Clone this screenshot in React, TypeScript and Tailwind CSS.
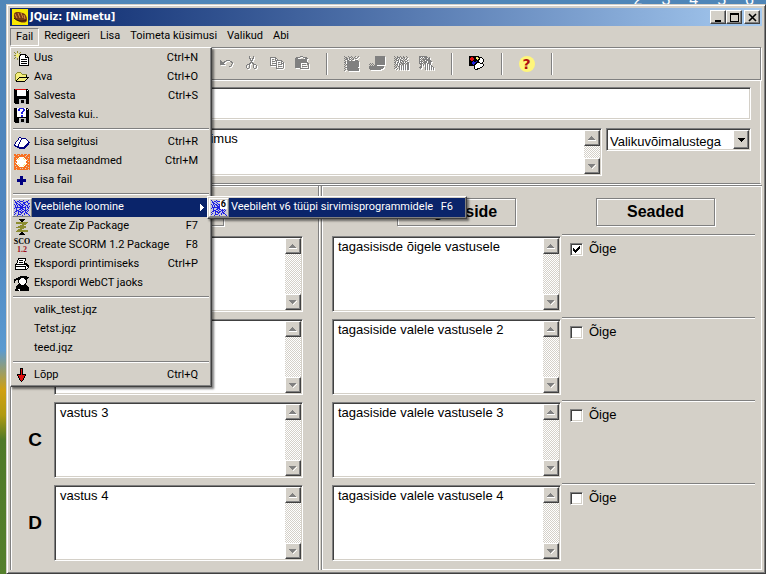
import React from "react";

type Palette = Record<string, string>;

const palette: Palette = {
  k: "#000000",
  w: "#ffffff",
  y: "#f4ee7c",
  g: "#808080",
  l: "#c0c0c0",
  b: "#2020e0",
  n: "#000080",
  r: "#e01010",
  m: "#a01020",
  o: "#f87020",
  v: "#8c8c30",
  p: "#b8bcf4",
};

function Pixels({ rows, className = "" }: { rows: string[]; className?: string }) {
  const cells: React.ReactNode[] = [];
  rows.forEach((row, y) => {
    let x = 0;
    while (x < row.length) {
      const c = row[x];
      let end = x + 1;
      while (end < row.length && row[end] === c) end++;
      if (palette[c]) {
        cells.push(<rect key={`${x}-${y}`} x={x} y={y} width={end - x} height={1} fill={palette[c]} />);
      }
      x = end;
    }
  });
  return (
    <svg viewBox="0 0 16 16" shapeRendering="crispEdges" aria-hidden="true" className={`size-4 shrink-0 ${className}`}>
      {cells}
    </svg>
  );
}

const newDoc = [
  "...v............",
  "v..v..v.........",
  ".v.y.v..........",
  "..yyy.kkkkkk....",
  "vvyyyvkwwwwkk...",
  "..yyykwwwwwkwk..",
  ".v.y.kwwwwwkkkk.",
  "v..v.kwwwwwwwwk.",
  "...v.kwkkkkkkwk.",
  ".....kwwwwwwwwk.",
  ".....kwkkkkkkwk.",
  ".....kwwwwwwwwk.",
  ".....kwkkkkkkwk.",
  ".....kwwwwwwwwk.",
  ".....kkkkkkkkkk.",
];
const openFolder = [
  "",
  "",
  "...vvvv.........",
  "..vyyyyv........",
  ".vyyyyyyvvvvv...",
  ".vyyyyyyyyyyk...",
  ".vyyyyyyyyyyk...",
  ".vyyykkkkkkkkkk.",
  ".vyykyyyyyyyyk..",
  ".vykyyyyyyyyk...",
  ".vkyyyyyyyyk....",
  "..kkkkkkkkk.....",
];
const save = [
  "krrrrrrrrrrrkk..",
  "kkkwwwwwwwwwkwk.",
  "kkkwwwwwwwwwkkk.",
  "kkkwwwwwwwwwkkk.",
  "kkkwwwwwwwwwkkk.",
  "kkkwwwwwwwwwkkk.",
  "kkkwwwwwwwwwkkk.",
  "kkkkkkkkkkkkkkk.",
  "kkkkkkkkkkkkkkk.",
  "kkkkkkkkkkkkkkk.",
  "kkkkklllllllkkk.",
  "kkkkkllkkkllkkk.",
  "kkkkkllkkkllkkk.",
  "kkkkkllkkkllkkk.",
  ".kkkklllllllkkk.",
];
const saveAs = [
  "kkkwwbbbbbwwkk..",
  "kkkwbbwwwbbwkwk.",
  "kkkwbbwwwbbwkkk.",
  "kkkwwwwwbbwwkkk.",
  "kkkwwwwbbwwwkkk.",
  "kkkwwwwbbwwwkkk.",
  "kkkwwwwwwwwwkkk.",
  "kkkwwwwbbwwwkkk.",
  "kkkwwwwbbwwwkkk.",
  "kkkkkkkkkkkkkkk.",
  "kkkkklllllllkkk.",
  "kkkkkllkkkllkkk.",
  "kkkkkllkkkllkkk.",
  "kkkkkllkkkllkkk.",
  ".kkkklllllllkkk.",
];
const book = [
  "",
  "",
  ".....nn.........",
  "....nwwnnnnn....",
  "....nwwnwwwwn...",
  "...nwwnwwwwwwn..",
  "..nwwwnwwwwwwwn.",
  ".nwwwnwwwwwwwwnn",
  ".nwwwnwwwwwwwnn.",
  "nwwwnwwwwwwwnnn.",
  "nnwwnwwwwwwnnn..",
  ".nnnnwwwwwnnn...",
  "...nnnnnnnnn....",
  ".....nnnnnn.....",
];
const metadata = [
  "oo.ooo.oo.ooo.oo",
  "oooo.ooooooo.ooo",
  ".oooooooooo.oooo",
  "ooooowwwwwoooo.o",
  "oo.owywwwywooooo",
  "ooowywwwwwywo.oo",
  "oowwwwwwwwwwwooo",
  "ooowwwwwwwwwoo.o",
  "o.owwwwwwwwwoooo",
  "oowwwwwwwwwwwooo",
  "ooowywwwwwywoo.o",
  "o.oowywwwywooooo",
  "ooooowwwwwoo.ooo",
  "oo.ooooooooooo.o",
  "oooooo.o.oo.oooo",
  "oo.ooooooooooo.o",
];
const plus = [
  "",
  "",
  "",
  "......nnn.......",
  "......nnn.......",
  "......nnn.......",
  "...nnnnnnnnn....",
  "...nnnnnnnnn....",
  "...nnnnnnnnn....",
  "......nnn.......",
  "......nnn.......",
  "......nnn.......",
];
const web = [
  "b..p.bp..b..p.b.",
  ".b.bbpbbbp.pbb..",
  "pbb.pbp..bbbpbp.",
  ".pbbp.bppbb..pbb",
  "b.bpbbpbbpbbp.b.",
  "pbpb.bbpbb.pbbpp",
  ".b.bp.bbb.pb.b.b",
  "pbbbbbbbbbbbpbbp",
  "b.bp.pbbb.pb..bp",
  ".pb.pbbpbbpbpbp.",
  "p.bbb.pbp.bbb.b.",
  ".bbpbbb.bbpb.bp.",
  "b.p.bpbbbp.bbp.p",
  ".bp.b..b.pbpbb..",
  "bp.pbbbp..b.p.bp",
  "p..b..p.b.p...pb",
];
const zip = [
  ".....kkkkkk.....",
  "......kkkk......",
  ".......kk.......",
  "..vvvvvvvvvvvv..",
  "..vvvvvvvvvvv...",
  "........vvvv....",
  "......vvvv......",
  "....vvvvvvvv....",
  "..vvvvvvvvvv....",
  "......vvvv......",
  "....vvvv........",
  "...vvvvvvvvvvv..",
  "..vvvvvvvvvvvv..",
  ".......kk.......",
  "......kkkk......",
  ".....kkkkkk.....",
];
const printer = [
  "",
  "....kkkkkkkk....",
  "....kwwwwwwk....",
  "...kwkkkkwwk....",
  "...kwwwwwwk.....",
  "...kwkkkkwk.....",
  "..kwwwwwwwkkk...",
  ".kkkkkkkkkkkkk..",
  ".kwwwwwwwwwwkkk.",
  ".kkkkkkkkkkkwkk.",
  ".kwwwwwwwwwkwwk.",
  ".kwwwwwwwwwkwk..",
  ".kkkkkkkkkkkk...",
];
const webct = [
  "......kkkkkkk...",
  "....kkkkkkkkkkk.",
  "..kkkkkwwwkkkk..",
  "kkkkkkwwwwwkk...",
  "kk..kwwwwwwwk...",
  "k...kwwwwwwwk...",
  "k...kwwwwwwwk...",
  ".....kwwwwwk....",
  "....kkkwwwkk....",
  "...kkkkkkkkkk...",
  "..kkkkkkkkkkkk..",
  "..kkkkkkkkkkkkk.",
  "..kkkkkkkkkkkkk.",
  ".kkkwwkkkkkkkkk.",
  ".kkkkwkkkkkkkkk.",
];
const downArrow = [
  "......kkk.......",
  "......krk.......",
  "......krk.......",
  "......krk.......",
  "......krk.......",
  "......krk.......",
  "...kkkkrkkkk....",
  "...krrrrrrrk....",
  "....krrrrrk.....",
  "....krrrrrk.....",
  ".....krrrk......",
  ".....krrrk......",
  "......krk.......",
  ".......k........",
];
const undo = [
  "",
  "",
  "",
  "",
  ".g.....gggg.....",
  ".gg..gg....gg...",
  ".ggggg......gg..",
  ".gggg........g..",
  ".ggggg......g...",
  "............g...",
  "..........gg....",
];
const cut = [
  ".....g...g......",
  ".....g...g......",
  ".....gg.gg......",
  "......g.g.......",
  "......ggg.......",
  ".......g........",
  "......ggg.......",
  ".....gg.gg......",
  "...ggg...ggg....",
  "..g..g...g..g...",
  "..g..g...g..g...",
  "..g..g...g..g...",
  "...gg.....gg....",
];
const copy = [
  "",
  ".gggggg.........",
  ".g....gg........",
  ".g.gg.g.g.......",
  ".g....ggggggg...",
  ".g.ggg.g....gg..",
  ".g.....g.gg.g.g.",
  ".g.ggggg....ggg.",
  ".g.....g.gggg.g.",
  ".ggggggg......g.",
  ".......g.gggg.g.",
  ".......g......g.",
  ".......ggggggg..",
];
const paste = [
  "......ggg.......",
  "..gggg...gggg...",
  ".ggg.......ggg..",
  ".gggggggggggg...",
  ".gggggggggggg...",
  ".gggggggggggg...",
  ".ggggggggggggg..",
  ".gggggg......gg.",
  ".gggggg.gggg.gg.",
  ".gggggg.......g.",
  ".gggggg.ggggg.g.",
  ".gggggg.......g.",
  "......ggggggggg.",
];
const addWeb = [
  "g...g..g...g..g.",
  ".gg..gg.g.g..g..",
  "g.gg.g.g.g.gg...",
  ".ggg.gg.gg......",
  "g..gg..g...ggg..",
  ".g.gggggggggggg.",
  "gg.gggggggggggg.",
  ".g.gggggggggggg.",
  "g.ggggggggggggg.",
  ".g.gggggggggggg.",
  "g..gggggggggggg.",
  ".ggggggggggggg..",
  "g..gggggggggggg.",
  ".g.gggggggggggg.",
  "g...ggggggggggg.",
];
const pages = [
  "......gggggggggg",
  "......gggggggggg",
  "......gggggggggg",
  "......gggggggggg",
  "......gggggggggg",
  "......gggggggggg",
  "......gggggggggg",
  ".g.g..gggggggggg",
  "g.g.g.gggggggggg",
  ".g.g.ggg........",
  "ggggggggggggggg.",
  "ggggggggggggggg.",
  "gggggggggggggg..",
  ".ggggggggggg....",
];
const webBars = [
  "g..g..g..g..g...",
  ".g.ggg.g.gg..g..",
  "g.gg.g.gg.g.g...",
  ".gg.g.g..g.gg...",
  "g.ggg.ggg.g..g..",
  ".g..g.g.gg.gg...",
  "gg.gg.gg.g.g.gg.",
  ".g.g.g.gggg.ggg.",
  "g.gg.gg.gg.g.gg.",
  ".g.g.g.g.g.g.gg.",
  "g.g.gg.g.g.g.gg.",
  ".gg..g.g.g.g.gg.",
  "g..g.g.g.g.g.gg.",
  "..g..g.g.g.g.gg.",
];
const barsOut = [
  "gggggggg........",
  "gg.g.gggg.g.....",
  "g.g.g.gg.gg.....",
  "gg.gggggggg.....",
  "g.g.gg.ggggg....",
  "gggg.ggg.gggg...",
  "g.g.gggg.ggg....",
  "gggg.gg.gggg....",
  ".gg.g.g.g.gg....",
  "..g.g.g.g.g.g...",
  ".gg...g.g.g.gg..",
  "ggg...g.g.g.g.g.",
  ".g....g.g.g.g.g.",
  "......g.g.g.g.g.",
];
const colours = [
  "kkkkkkkkkk......",
  "kkrrkkkyykkkk...",
  "krrrrkkyyykwwk..",
  "krrrrkkkykkwwwk.",
  "kkrrkkkkkkwwwwk.",
  "kkkkbkkbkkwwwwk.",
  "kkkbbbbkkkkwwk..",
  "kkkbbbkkwwwkkk..",
  "kkkkbkkwwwwwwwk.",
  "kkkkkkwwwwwwwwk.",
  ".....kwwwwwwwk..",
  ".....kwwwwwkk...",
  ".....kwwkkk.....",
  "......kkk.......",
];

const raised =
  "border border-t-white border-l-white border-r-[#404040] border-b-[#404040] shadow-[inset_-1px_-1px_0_#808080] bg-[#d4d0c8]";
const sunken =
  "border border-t-[#808080] border-l-[#808080] border-r-white border-b-white shadow-[inset_1px_1px_0_#404040,inset_-1px_-1px_0_#d4d0c8] bg-white";
const etched = "border border-[#808080] shadow-[1px_1px_0_#fff,inset_1px_1px_0_#fff]";
const uiFont = "font-[Roboto,'DejaVu_Sans_Condensed',sans-serif]";
const fieldFont = "font-['Liberation_Sans',Arial,sans-serif] text-[13px] leading-4";

function ScrollBar() {
  const button = `flex h-4 items-center justify-center ${raised}`;
  return (
    <div className="flex w-4 shrink-0 flex-col justify-between bg-[repeating-conic-gradient(#ffffff_0_25%,#d4d0c8_0_50%)] bg-[length:2px_2px]">
      <button type="button" aria-label="Keri üles" className={button}>
        <svg viewBox="0 0 8 5" shapeRendering="crispEdges" className="h-[5px] w-2">
          <path d="M0 5h8v-1H0z" fill="#fff" />
          <path d="M3 0h1v1h1v1h1v1h1v1H0v-1h1V2h1V1h1z" fill="#808080" />
        </svg>
      </button>
      <button type="button" aria-label="Keri alla" className={button}>
        <svg viewBox="0 0 8 5" shapeRendering="crispEdges" className="h-[5px] w-2">
          <path d="M7 1h1v1H7v1H6v1H5v1H4V4h1V3h1V2h1z" fill="#fff" />
          <path d="M0 0h7v1H6v1H5v1H4v1H3V3H2V2H1V1H0z" fill="#808080" />
        </svg>
      </button>
    </div>
  );
}

function Memo({ text, label, className }: { text: string; label: string; className: string }) {
  return (
    <div className={`flex min-w-0 p-px ${sunken} ${className}`}>
      <textarea
        aria-label={label}
        defaultValue={text}
        className={`min-w-0 flex-1 resize-none overflow-hidden bg-white px-1 pt-px text-black outline-none ${fieldFont}`}
      />
      <ScrollBar />
    </div>
  );
}

type Entry = { label: string; keys?: string; icon?: React.ReactNode; active?: boolean };

function MenuEntry({ label, keys, icon, active }: Entry) {
  return (
    <button type="button" role="menuitem" className="flex h-[19px] w-full items-stretch text-left">
      <span
        className={`flex w-5 shrink-0 items-center justify-center ${
          active ? "border border-t-white border-l-white border-r-[#808080] border-b-[#808080]" : ""
        }`}
      >
        {icon}
      </span>
      <span className={`flex flex-1 items-center justify-between pl-[2px] ${active ? "bg-[#0a246a] text-white" : ""}`}>
        <span className="whitespace-nowrap">{label}</span>
        {keys ? <span className="pr-3">{keys}</span> : null}
        {active && !keys ? (
          <svg viewBox="0 0 4 7" shapeRendering="crispEdges" className="mr-[6px] h-[7px] w-1">
            <path d="M0 0h1v1h1v1h1v1h1v1H3v1H2v1H1v1H0z" fill="#fff" />
          </svg>
        ) : null}
      </span>
    </button>
  );
}

const scoIcon = (
  <span className="flex flex-col items-center font-['Liberation_Serif',serif] text-[8px] leading-[8px] font-bold">
    <span>SCO</span>
    <span className="text-[#a01020]">1.2</span>
  </span>
);

const fileMenu: Entry[][] = [
  [
    { label: "Uus", keys: "Ctrl+N", icon: <Pixels rows={newDoc} /> },
    { label: "Ava", keys: "Ctrl+O", icon: <Pixels rows={openFolder} /> },
    { label: "Salvesta", keys: "Ctrl+S", icon: <Pixels rows={save} /> },
    { label: "Salvesta kui..", icon: <Pixels rows={saveAs} /> },
  ],
  [
    { label: "Lisa selgitusi", keys: "Ctrl+R", icon: <Pixels rows={book} /> },
    { label: "Lisa metaandmed", keys: "Ctrl+M", icon: <Pixels rows={metadata} /> },
    { label: "Lisa fail", icon: <Pixels rows={plus} /> },
  ],
  [
    { label: "Veebilehe loomine", icon: <Pixels rows={web} />, active: true },
    { label: "Create Zip Package", keys: "F7", icon: <Pixels rows={zip} /> },
    { label: "Create SCORM 1.2 Package", keys: "F8", icon: scoIcon },
    { label: "Ekspordi printimiseks", keys: "Ctrl+P", icon: <Pixels rows={printer} /> },
    { label: "Ekspordi WebCT jaoks", icon: <Pixels rows={webct} /> },
  ],
  [{ label: "valik_test.jqz" }, { label: "Tetst.jqz" }, { label: "teed.jqz" }],
  [{ label: "Lõpp", keys: "Ctrl+Q", icon: <Pixels rows={downArrow} /> }],
];

const popup =
  "absolute z-10 border border-t-white border-l-white border-r-[#404040] border-b-[#404040] bg-[#d4d0c8] p-px shadow-[inset_-1px_-1px_0_#808080,2px_2px_2px_rgba(0,0,0,0.5)]";

function FileMenu() {
  return (
    <div role="menu" aria-label="Fail" className={`top-full left-0 w-[202px] ${popup}`}>
      {fileMenu.map((group, i) => (
        <React.Fragment key={i}>
          {i > 0 ? (
            <div role="separator" className="flex h-2 items-center px-px">
              <div className="h-[2px] flex-1 border-t border-b border-t-[#808080] border-b-white" />
            </div>
          ) : null}
          {group.map((entry) => (
            <MenuEntry key={entry.label} {...entry} />
          ))}
        </React.Fragment>
      ))}
      <div role="menu" aria-label="Veebilehe loomine" className={`top-[148px] left-[196px] w-[260px] ${popup}`}>
        <MenuEntry
          label="Veebileht v6 tüüpi sirvimisprogrammidele"
          keys="F6"
          active
          icon={
            <span className="relative">
              <Pixels rows={web} />
              <span className="absolute top-0 right-0 h-[9px] bg-white px-px text-[9px] leading-[9px] font-bold text-black">6</span>
            </span>
          }
        />
      </div>
    </div>
  );
}

type Tool = { name: string; rows: string[]; off?: boolean } | null;

const tools: Tool[] = [
  { name: "Uus", rows: newDoc },
  { name: "Ava", rows: openFolder },
  { name: "Salvesta", rows: save },
  { name: "Salvesta kui", rows: saveAs },
  null,
  { name: "Veebileht", rows: web },
  { name: "Lisa selgitusi", rows: book },
  null,
  { name: "Võta tagasi", rows: undo, off: true },
  { name: "Lõika", rows: cut, off: true },
  { name: "Kopeeri", rows: copy, off: true },
  { name: "Kleebi", rows: paste, off: true },
  null,
  { name: "Lisa pilt", rows: addWeb, off: true },
  { name: "Lisa leht", rows: pages, off: true },
  { name: "Lisa link", rows: webBars, off: true },
  { name: "Lisa objekt", rows: barsOut, off: true },
  null,
  { name: "Seadistus", rows: colours },
  null,
];

function ToolSeparator() {
  return (
    <div className="flex w-[25px] justify-center">
      <div className="h-[22px] w-[2px] border-r border-l border-r-white border-l-[#808080]" />
    </div>
  );
}

function ToolBar() {
  return (
    <div role="toolbar" className={`mr-px flex h-[33px] items-center pl-[3px] ${etched}`}>
      {tools.map((tool, i) =>
        tool ? (
          <button key={i} type="button" aria-label={tool.name} disabled={tool.off} className="flex w-[25px] justify-center">
            <Pixels rows={tool.rows} className={tool.off ? "drop-shadow-[1px_1px_0_#fff]" : ""} />
          </button>
        ) : (
          <ToolSeparator key={i} />
        ),
      )}
      <button type="button" aria-label="Abi" className="flex w-[25px] justify-center">
        <span className="flex size-4 items-center justify-center rounded-full bg-[#fff67a] font-['DejaVu_Sans',sans-serif] text-[14px] leading-4 font-bold text-[#b01010]">
          ?
        </span>
      </button>
      <ToolSeparator />
    </div>
  );
}

function TitleBar() {
  const button = `flex h-[14px] w-4 items-center justify-center ${raised}`;
  return (
    <header className="flex h-[18px] items-center bg-linear-to-r from-[#0a246a] to-[#a6caf0] px-[2px]">
      <svg viewBox="0 0 16 16" className="size-4">
        <rect width="16" height="16" fill="#f8e800" />
        <path d="M2 5c1-3 5-2 9-1 3 1 4 4 4 7s-4 3-7 2S1 10 2 5z" fill="#7a3a10" />
        <path d="M3 5l2 4M6 4l2 5M9 4l2 5M12 6l1 4" stroke="#d89040" />
        <path d="M2 9c3 3 8 4 12 2" stroke="#301808" fill="none" />
      </svg>
      <h1 className="flex-1 pl-[2px] font-['DejaVu_Sans_Condensed','DejaVu_Sans',sans-serif] text-[11px] font-bold text-white">
        JQuiz: [Nimetu]
      </h1>
      <button type="button" aria-label="Minimeeri" className={button}>
        <svg viewBox="0 0 9 9" shapeRendering="crispEdges" className="size-[9px]">
          <path d="M1 7h6v2H1z" />
        </svg>
      </button>
      <button type="button" aria-label="Maksimeeri" className={button}>
        <svg viewBox="0 0 9 9" shapeRendering="crispEdges" className="size-[9px]">
          <path fillRule="evenodd" d="M0 0h9v9H0zM1 2h7v6H1z" />
        </svg>
      </button>
      <button type="button" aria-label="Sulge" className={`ml-[2px] ${button}`}>
        <svg viewBox="0 0 9 9" className="size-[9px]">
          <path d="M1 1l7 7M8 1L1 8" stroke="#000" strokeWidth="1.6" />
        </svg>
      </button>
    </header>
  );
}

function MenuBar() {
  return (
    <nav className="relative flex h-[21px] items-center text-[11px]">
      <button
        type="button"
        aria-expanded="true"
        className="h-[18px] border border-t-[#808080] border-l-[#808080] border-r-white border-b-white px-[5px]"
      >
        Fail
      </button>
      {["Redigeeri", "Lisa", "Toimeta küsimusi", "Valikud", "Abi"].map((name) => (
        <button key={name} type="button" className="h-[18px] px-[5px] whitespace-nowrap">
          {name}
        </button>
      ))}
      <FileMenu />
    </nav>
  );
}

const answers = [
  { letter: "A", answer: "vastus 1", feedback: "tagasisisde õigele vastusele", correct: true },
  { letter: "B", answer: "vastus 2", feedback: "tagasiside valele vastusele 2", correct: false },
  { letter: "C", answer: "vastus 3", feedback: "tagasiside valele vastusele 3", correct: false },
  { letter: "D", answer: "vastus 4", feedback: "tagasiside valele vastusele 4", correct: false },
];

function ColumnHead({ children }: { children: string }) {
  return (
    <h2
      className={`flex h-7 w-[119px] shrink-0 items-center justify-center font-['Liberation_Sans',Arial,sans-serif] text-base font-bold ${etched}`}
    >
      {children}
    </h2>
  );
}

function Question() {
  return (
    <section className="mr-px flex flex-col gap-2 border-r border-b border-r-white border-b-[#808080] pt-[7px] pr-[9px] pb-[7px] pl-[120px] shadow-[0_1px_0_#fff]">
      <input aria-label="Pealkiri" className={`h-[33px] w-full px-[5px] outline-none ${sunken} ${fieldFont}`} />
      <div className="flex items-start">
        <Memo label="Küsimus" text="Esimene küsimus" className="h-12 flex-1" />
        <div className={`relative ml-1 h-[23px] w-[145px] ${sunken}`}>
          <select
            aria-label="Küsimuse tüüp"
            className={`h-full w-full appearance-none bg-transparent pr-5 pl-[3px] outline-none ${fieldFont}`}
          >
            <option>Valikuvõimalustega</option>
          </select>
          <span className={`pointer-events-none absolute top-px right-px bottom-px flex w-4 items-center justify-center ${raised}`}>
            <svg viewBox="0 0 7 4" shapeRendering="crispEdges" className="h-1 w-[7px]">
              <path d="M0 0h7v1H6v1H5v1H4v1H3V3H2V2H1V1H0z" />
            </svg>
          </span>
        </div>
      </div>
    </section>
  );
}

function Answers() {
  return (
    <main className="mt-px grid flex-1 grid-cols-[309fr_443fr] border-t border-[#808080]">
      <section className="border-x border-l-[#808080] border-r-[#808080] pt-3 shadow-[inset_1px_1px_0_#fff,1px_0_0_#fff]">
        <div className="mb-[6px] flex justify-center">
          <ColumnHead>Vastused</ColumnHead>
        </div>
        {answers.map((row) => (
          <div key={row.letter} className="flex h-[83px] items-start pt-[4px] pr-[15px]">
            <div className="flex h-[76px] w-[43px] items-center justify-center pl-[5px] font-['Liberation_Sans',Arial,sans-serif] text-[19px] font-bold">
              {row.letter}
            </div>
            <Memo label={`Vastus ${row.letter}`} text={row.answer} className="h-[76px] flex-1" />
          </div>
        ))}
      </section>
      <section className="ml-[2px] border-l border-[#808080] pt-3 pr-[7px] shadow-[inset_1px_1px_0_#fff,inset_-1px_-1px_0_#fff]">
        <div className="mb-[6px] flex gap-20 pl-[75px]">
          <ColumnHead>Tagasiside</ColumnHead>
          <ColumnHead>Seaded</ColumnHead>
        </div>
        {answers.map((row) => (
          <div key={row.letter} className="grid h-[83px] grid-cols-[229fr_193fr] items-start gap-px pt-[2px] pl-[10px]">
            <Memo label={`Tagasiside ${row.letter}`} text={row.feedback} className="mt-[2px] h-[76px]" />
            <div className="border-t border-[#808080] pt-[6px] pl-2 shadow-[inset_0_1px_0_#fff]">
              <label className={`flex items-center gap-[6px] ${fieldFont}`}>
                <span className={`grid size-[13px] place-items-center ${sunken}`}>
                  <input
                    type="checkbox"
                    defaultChecked={row.correct}
                    className="peer col-start-1 row-start-1 size-[11px] appearance-none outline-none"
                  />
                  <svg
                    viewBox="0 0 7 7"
                    shapeRendering="crispEdges"
                    className="pointer-events-none invisible col-start-1 row-start-1 size-[7px] peer-checked:visible"
                  >
                    <path d="M0 2h1v1h1v1h1V3h1V2h1V1h1V0h1v3H6v1H5v1H4v1H3v1H2V6H1V5H0z" />
                  </svg>
                </span>
                Õige
              </label>
            </div>
          </div>
        ))}
      </section>
    </main>
  );
}

export default function App() {
  return (
    <div
      className={`relative flex min-h-screen overflow-hidden bg-[linear-gradient(#4f86b8_0px,#4f86c0_230px,#5a9ad0_350px,#d0a010_390px,#b09a10_415px,#4f7a28_440px,#55802c_574px)] pt-1 pl-[6px] text-black ${uiFont}`}
    >
      <div className="absolute top-0 right-3 flex h-1 items-end gap-[19px] overflow-hidden font-['Liberation_Sans',Arial,sans-serif] text-[16px] leading-[8px] text-white">
        <span>2</span>
        <span>3</span>
        <span>4</span>
        <span>5</span>
        <span>6</span>
      </div>
      <div className="flex min-w-0 flex-1 flex-col border border-t-[#d4d0c8] border-l-[#d4d0c8] border-r-[#404040] border-b-[#404040] bg-[#d4d0c8] p-[3px] shadow-[inset_1px_1px_0_#fff,inset_-1px_-1px_0_#808080]">
        <TitleBar />
        <MenuBar />
        <ToolBar />
        <Question />
        <Answers />
      </div>
    </div>
  );
}
